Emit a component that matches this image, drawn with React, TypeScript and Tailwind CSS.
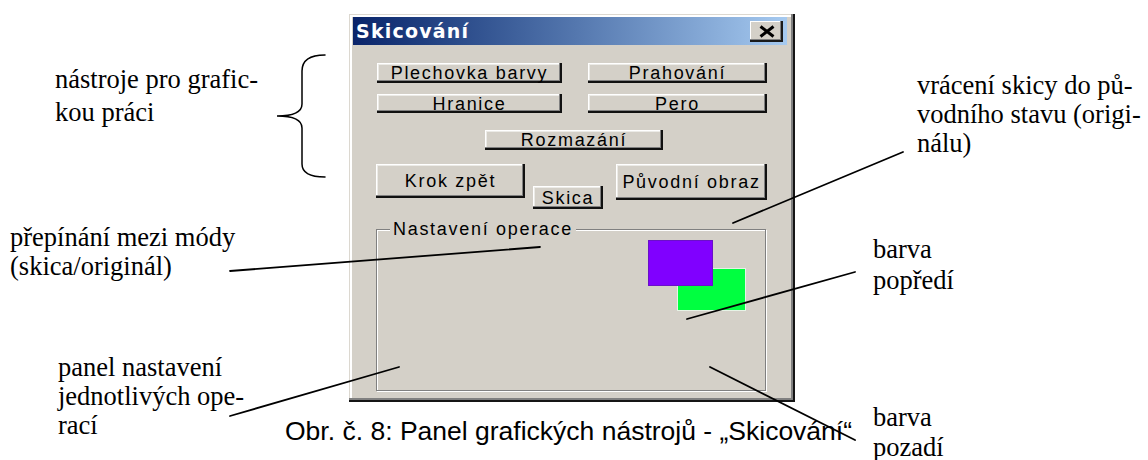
import type { ReactNode } from "react"

/* classic 3D push button */
function Btn({ children, className }: { children: ReactNode; className: string }) {
  return (
    <button
      type="button"
      className={[
        "flex items-center justify-center bg-[#d4d0c8] text-black",
        "font-['Liberation_Sans',Arial,sans-serif] text-[18px] leading-none tracking-[1.7px]",
        "shadow-[inset_-2px_-2px_0_#111111,inset_-3px_-3px_0_#808080,inset_1px_1px_0_#ffffff,inset_2px_2px_0_#ecebe7]",
        className,
      ].join(" ")}
    >
      {children}
    </button>
  )
}

function Note({ children, className }: { children: ReactNode; className: string }) {
  return (
    <div
      className={[
        "absolute whitespace-nowrap text-black",
        "font-['Liberation_Serif','Times_New_Roman',serif] text-[26.5px]",
        className,
      ].join(" ")}
    >
      {children}
    </div>
  )
}

export default function App() {
  return (
    <div className="relative h-[460px] w-[1148px] overflow-hidden bg-white">
      {/* Tool window */}
      <div className="pl-[349px] pt-[14px]">
        <div className="flex h-[388px] w-[446px] flex-col bg-[#d4d0c8] pt-[3px] pl-[4px] pr-[8px] shadow-[inset_-2px_-2px_0_#151515,inset_-4px_-4px_0_#808080,inset_1px_1px_0_#dcd8d0,inset_3px_3px_0_#ffffff]">
          {/* Title bar */}
          <div className="flex h-[28px] items-center justify-between bg-linear-to-r from-[#0a246a] to-[#a6caf0] pl-[3px] pr-[4px]">
            <span className="font-['DejaVu_Sans',Verdana,sans-serif] text-[19px] font-bold leading-none tracking-[1.2px] text-white">
              Skicování
            </span>
            <button
              type="button"
              aria-label="Zavřít"
              className="flex h-[21px] w-[33px] items-center justify-center bg-[#d4d0c8] shadow-[inset_-2px_-2px_0_#1a1a1a,inset_-3px_-3px_0_#808080,inset_1px_1px_0_#ffffff]"
            >
              <svg viewBox="0 0 18 13" className="h-[13px] w-[18px]" aria-hidden>
                <path d="M2.5 1.5 L15.5 11.5 M15.5 1.5 L2.5 11.5" stroke="#000" strokeWidth="3" fill="none" />
              </svg>
            </button>
          </div>

          {/* Client area */}
          <div className="flex flex-col pl-[24px]">
            <div className="mt-[18px] flex gap-[26px]">
              <Btn className="h-[20px] w-[185px]">Plechovka barvy</Btn>
              <Btn className="h-[20px] w-[179px]">Prahování</Btn>
            </div>
            <div className="mt-[11px] flex gap-[26px]">
              <Btn className="h-[19px] w-[185px]">Hranice</Btn>
              <Btn className="h-[19px] w-[179px]">Pero</Btn>
            </div>
            <div className="mt-[17px] flex pl-[108px]">
              <Btn className="h-[20px] w-[178px]">Rozmazání</Btn>
            </div>
            <div className="mt-[14px] flex items-start -ml-px">
              <Btn className="h-[34px] w-[149px]">Krok zpět</Btn>
              <Btn className="ml-[8px] mt-[22px] h-[23px] w-[70px]">Skica</Btn>
              <Btn className="ml-[13px] h-[36px] w-[151px]">Původní obraz</Btn>
            </div>

            {/* Operation settings group */}
            <fieldset className="mt-[11px] -ml-px h-[171px] w-[390px] border border-[#808080] shadow-[inset_1px_1px_0_#ffffff,1px_1px_0_#ffffff]">
              <legend className="ml-[13px] bg-[#d4d0c8] px-[3px] font-['Liberation_Sans',Arial,sans-serif] text-[18px] leading-none tracking-[1.7px] text-black">
                Nastavení operace
              </legend>
              <div className="ml-[271px] mt-[2px] grid w-max">
                <div className="col-start-1 row-start-1 ml-[29px] mt-[28px] h-[43px] w-[69px] border border-[#e6f3e6] bg-[#00ff40]" />
                <div className="relative z-10 col-start-1 row-start-1 h-[46px] w-[65px] self-start justify-self-start border border-[#6a10c8] bg-[#8000ff]" />
              </div>
            </fieldset>
          </div>
        </div>
      </div>

      {/* Caption */}
      <p className="mt-[14px] pl-[285px] font-['Liberation_Sans',Arial,sans-serif] text-[26.5px] leading-[30px] text-black">
        Obr. č. 8: Panel grafických nástrojů - „Skicování“
      </p>

      {/* Callout labels */}
      <Note className="left-[55px] top-[63px] leading-[33px]">
        nástroje pro grafic-
        <br />
        kou práci
      </Note>
      <Note className="left-[10px] top-[223px] leading-[29px]">
        přepínání mezi módy
        <br />
        (skica/originál)
      </Note>
      <Note className="left-[58px] top-[353px] leading-[29px]">
        panel nastavení
        <br />
        jednotlivých ope-
        <br />
        rací
      </Note>
      <Note className="left-[917px] top-[71px] leading-[29px]">
        vrácení skicy do pů-
        <br />
        vodního stavu (origi-
        <br />
        nálu)
      </Note>
      <Note className="left-[873px] top-[234px] leading-[31px]">
        barva
        <br />
        popředí
      </Note>
      <Note className="left-[873px] top-[402px] leading-[30px]">
        barva
        <br />
        pozadí
      </Note>

      {/* Callout strokes */}
      <svg
        className="pointer-events-none absolute left-0 top-0 h-[460px] w-[1148px]"
        viewBox="0 0 1148 460"
        aria-hidden
      >
        <g stroke="#000" strokeWidth="1.8" fill="none" strokeLinecap="round">
          <path d="M325 55 C311 55 302 60 302 71 L302 104 C302 112 293 116 277 116 C293 116 302 120 302 128 L302 164 C302 173 311 177 325 177" strokeWidth="1.5" />
          <line x1="230" y1="271" x2="540" y2="247" />
          <line x1="733" y1="223" x2="903" y2="152" />
          <line x1="687" y1="319" x2="855" y2="272" />
          <line x1="710" y1="367" x2="855" y2="440" />
          <line x1="230" y1="416" x2="399" y2="367" />
        </g>
      </svg>
    </div>
  )
}
